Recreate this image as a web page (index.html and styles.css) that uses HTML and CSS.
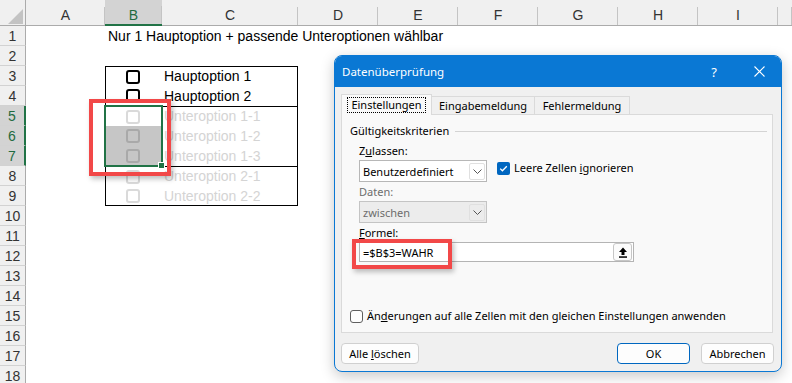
FILE: index.html
```html
<!DOCTYPE html>
<html lang="de">
<head>
    <meta charset="UTF-8">
    <meta name="viewport" content="width=device-width, initial-scale=1.0">
    <title>Datenüberprüfung - Hauptoption / Unteroptionen</title>
    <link rel="stylesheet" href="styles.css">
</head>
<body>
<div class="page">
    <div class="sheet">
        <div class="colhead">
            <div class="corner">
                <svg width="15" height="15" viewBox="0 0 15 15"><polygon points="15,0 15,15 0,15" fill="#c3c3c3"/></svg>
            </div>
            <div class="ch">A</div>
            <div class="ch sel">B</div>
            <div class="ch">C</div>
            <div class="ch">D</div>
            <div class="ch">E</div>
            <div class="ch">F</div>
            <div class="ch">G</div>
            <div class="ch">H</div>
            <div class="ch">I</div>
            <div class="ch last"></div>
        </div>

        <div class="rows">
            <div class="rh">1</div><div class="cell"></div><div class="cell note">Nur 1 Hauptoption + passende Unteroptionen wählbar</div><div class="cell"></div><div class="cell"></div>
            <div class="rh">2</div><div class="cell"></div><div class="cell"></div><div class="cell"></div><div class="cell"></div>

            <div class="rh">3</div><div class="cell"></div>
            <div class="cell tb top"><span class="cb"></span></div><div class="cell tc top">Hauptoption 1</div><div class="cell"></div>
            <div class="rh">4</div><div class="cell"></div>
            <div class="cell tb"><span class="cb"></span></div><div class="cell tc">Hauptoption 2</div><div class="cell"></div>

            <div class="rh sel">5</div><div class="cell"></div>
            <div class="cell tb top"><span class="cb sub"></span></div><div class="cell tc top sub">Unteroption 1-1</div><div class="cell"></div>
            <div class="rh sel">6</div><div class="cell"></div>
            <div class="cell tb shade"><span class="cb sub"></span></div><div class="cell tc sub">Unteroption 1-2</div><div class="cell"></div>
            <div class="rh sel">7</div><div class="cell"></div>
            <div class="cell tb shade"><span class="cb sub"></span></div><div class="cell tc sub">Unteroption 1-3</div><div class="cell"></div>

            <div class="rh">8</div><div class="cell"></div>
            <div class="cell tb top"><span class="cb sub"></span></div><div class="cell tc top sub">Unteroption 2-1</div><div class="cell"></div>
            <div class="rh">9</div><div class="cell"></div>
            <div class="cell tb bot"><span class="cb sub"></span></div><div class="cell tc bot sub">Unteroption 2-2</div><div class="cell"></div>

            <div class="rh">10</div><div class="cell"></div><div class="cell"></div><div class="cell"></div><div class="cell"></div>
            <div class="rh">11</div><div class="cell"></div><div class="cell"></div><div class="cell"></div><div class="cell"></div>
            <div class="rh">12</div><div class="cell"></div><div class="cell"></div><div class="cell"></div><div class="cell"></div>
            <div class="rh">13</div><div class="cell"></div><div class="cell"></div><div class="cell"></div><div class="cell"></div>
            <div class="rh">14</div><div class="cell"></div><div class="cell"></div><div class="cell"></div><div class="cell"></div>
            <div class="rh">15</div><div class="cell"></div><div class="cell"></div><div class="cell"></div><div class="cell"></div>
            <div class="rh">16</div><div class="cell"></div><div class="cell"></div><div class="cell"></div><div class="cell"></div>
            <div class="rh">17</div><div class="cell"></div><div class="cell"></div><div class="cell"></div><div class="cell"></div>
            <div class="rh">18</div><div class="cell"></div><div class="cell"></div><div class="cell"></div><div class="cell"></div>
        </div>

        <!-- Markierung B5:B7 -->
        <div class="selection"></div>
        <div class="handle"></div>
    </div>

    <div class="dialog">
        <div class="titlebar">
            <span class="dtitle">Datenüberprüfung</span>
            <span class="help">?</span>
            <span class="close">
                <svg width="11" height="11" viewBox="0 0 11 11"><path d="M0.5 0.5 L10.5 10.5 M10.5 0.5 L0.5 10.5" stroke="#fff" stroke-width="1.1"/></svg>
            </span>
        </div>
        <div class="dbody">
            <div class="tabs">
                <div class="tab active"><span class="focus">Einstellungen</span></div>
                <div class="tab w2">Eingabemeldung</div>
                <div class="tab w3">Fehlermeldung</div>
            </div>
            <div class="panel">
                <div class="group"><span>Gültigkeitskriterien</span><span class="rule"></span></div>
                <div class="fields">
                    <div class="lbl">Z<u>u</u>lassen:</div>
                    <div class="line">
                        <div class="select">
                            <span class="val">Benutzerdefiniert</span>
                            <span class="drop"><svg width="9" height="5" viewBox="0 0 9 5"><polyline points="0.5,0.5 4.5,4.5 8.5,0.5" fill="none" stroke="#555" stroke-width="1"/></svg></span>
                        </div>
                        <div class="check">
                            <span class="box on"><svg width="13" height="13" viewBox="0 0 13 13"><path d="M3.2 6.6 L5.4 8.8 L9.8 4.2" fill="none" stroke="#fff" stroke-width="1.3"/></svg></span>
                            <span>Leere Zellen <u>i</u>gnorieren</span>
                        </div>
                    </div>
                    <div class="lbl dim">Daten:</div>
                    <div class="select off">
                        <span class="val">zwischen</span>
                        <span class="drop"><svg width="9" height="5" viewBox="0 0 9 5"><polyline points="0.5,0.5 4.5,4.5 8.5,0.5" fill="none" stroke="#555" stroke-width="1"/></svg></span>
                    </div>
                    <div class="lbl"><u>F</u>ormel:</div>
                    <div class="formula">
                        <span class="val">=$B$3=WAHR</span>
                        <span class="pick"><svg width="10" height="11" viewBox="0 0 10 11"><path d="M5 0.5 L9 5 H6.5 V8 H3.5 V5 H1 Z" fill="#000"/><rect x="1" y="9.3" width="8" height="1.5" fill="#000"/></svg></span>
                    </div>
                </div>
                <div class="check apply">
                    <span class="box"></span>
                    <span>Än<u>d</u>erungen auf alle Zellen mit den gleichen Einstellungen anwenden</span>
                </div>
            </div>
            <div class="buttons">
                <button class="btn">Alle <u>l</u>öschen</button>
                <span class="spacer"></span>
                <button class="btn ok">OK</button>
                <button class="btn">Abbrechen</button>
            </div>
        </div>
    </div>

    <!-- rote Hervorhebungen -->
    <div class="mark mark-cells"></div>
    <div class="mark mark-formula"></div>
</div>
</body>
</html>
```

FILE: styles.css
```css
body {
    margin: 0;
    padding: 0;
    background-color: #fff;
    font-family: "Liberation Sans", Arial, sans-serif;
    color: #000;
}
.page {
    position: relative;
    width: 792px;
    height: 383px;
    overflow: hidden;
}

/* Tabelle */
.sheet {
    position: relative;
}
.colhead {
    display: grid;
    grid-template-columns: 26px 79px 57px 136px repeat(6, 80px) 1fr;
    height: 26px;
    box-sizing: border-box;
    background-color: #f0f0f0;
    border-bottom: 1px solid #ababab;
}
.corner {
    display: flex;
    justify-content: flex-end;
    align-items: flex-end;
    padding: 0 2px 1px 0;
    border-right: 1px solid #ababab;
}
.ch {
    padding-top: 7px;
    line-height: 16px;
    text-align: center;
    font-size: 14px;
    color: #333;
    background: linear-gradient(#c4c4c4, #c4c4c4) right bottom / 1px 18px no-repeat;
}
.ch.sel {
    background-color: #d3d3d3;
    color: #1f6b3f;
    border-bottom: 2px solid #217346;
    margin-bottom: -1px;
}
.rows {
    display: grid;
    grid-template-columns: 26px 79px 57px 136px 1fr;
    grid-auto-rows: 20px;
}
.rh {
    box-sizing: border-box;
    padding-top: 1px;
    background-color: #f0f0f0;
    border-right: 1px solid #ababab;
    border-bottom: 1px solid #d2d2d2;
    font-size: 14px;
    line-height: 19px;
    text-align: center;
    color: #333;
}
.rh.sel {
    background-color: #d3d3d3;
    color: #1f6b3f;
    border-right: 2px solid #217346;
}
.cell {
    box-sizing: border-box;
    font-size: 14px;
    line-height: 20px;
    white-space: nowrap;
}
.note {
    padding-left: 3px;
}
.tb {
    border-left: 1px solid #000;
    display: flex;
    align-items: center;
    justify-content: center;
}
.tc {
    border-right: 1px solid #000;
    padding-left: 2px;
}
.top {
    border-top: 1px solid #000;
    line-height: 19px;
}
.bot {
    border-bottom: 1px solid #000;
}
.tc.sub {
    color: #d4d4d4;
}
.shade {
    background-color: #c6c6c6;
}
.cb {
    width: 14px;
    height: 14px;
    box-sizing: border-box;
    border: 2px solid #000;
    border-radius: 3px;
    margin-left: -2px;
}
.cb.sub {
    border-color: #dadada;
}
.shade .cb.sub {
    border-color: #a9a9a9;
}
.selection {
    position: absolute;
    left: 104px;
    top: 105px;
    width: 59px;
    height: 62px;
    box-sizing: border-box;
    border: 2px solid #217346;
}
.handle {
    position: absolute;
    left: 158px;
    top: 162px;
    width: 7px;
    height: 7px;
    box-sizing: border-box;
    background-color: #217346;
    border: 1px solid #fff;
}

/* Dialog */
.dialog {
    position: absolute;
    left: 334px;
    top: 55px;
    width: 448px;
    height: 317px;
    box-sizing: border-box;
    border: 1px solid #0a78d4;
    border-radius: 8px;
    background-color: #f0f0f0;
    overflow: hidden;
    font-family: "Noto Sans", "Open Sans", sans-serif;
    font-size: 11px;
    color: #000;
    box-shadow: 0 4px 14px rgba(0, 0, 0, 0.22);
}
.titlebar {
    display: flex;
    align-items: center;
    height: 31px;
    padding-left: 7px;
    background-color: #0a78d4;
    color: #fff;
    font-size: 11.5px;
}
.dtitle {
    flex: 1;
}
.help {
    width: 46px;
    text-align: center;
    font-size: 13px;
}
.close {
    width: 44px;
    display: flex;
    justify-content: center;
}
.dbody {
    padding: 7px 8px 0 6px;
}
.tabs {
    display: flex;
    align-items: flex-end;
    height: 20px;
}
.tab {
    box-sizing: border-box;
    height: 18px;
    display: flex;
    align-items: center;
    justify-content: center;
    border: 1px solid #dadada;
    border-bottom: none;
    border-left: none;
    background-color: #f0f0f0;
}
.tab.active {
    width: 91px;
    height: 21px;
    margin-bottom: -1px;
    position: relative;
    border-left: 1px solid #dadada;
    background-color: #f9f9f9;
}
.tab.w2 {
    width: 103px;
}
.tab.w3 {
    width: 95px;
}
.focus {
    border: 1px dotted #000;
    padding: 0 3px;
    line-height: 14px;
}
.panel {
    height: 219px;
    box-sizing: border-box;
    display: flex;
    flex-direction: column;
    padding: 8px 5px 8px 8px;
    background-color: #f9f9f9;
    border: 1px solid #dadada;
}
.group {
    display: flex;
    align-items: center;
    line-height: 16px;
}
.rule {
    flex: 1;
    margin-left: 6px;
    border-top: 1px solid #d4d4d4;
}
.fields {
    padding-left: 9px;
}
.lbl {
    margin-top: 2px;
    line-height: 16px;
}
.fields .lbl:first-child {
    margin-top: 4px;
}
.lbl.dim {
    color: #6d6d6d;
}
.line {
    display: flex;
    align-items: flex-start;
    margin-top: 1px;
}
.select {
    width: 128px;
    height: 22px;
    box-sizing: border-box;
    display: flex;
    align-items: center;
    border: 1px solid #b7b7b7;
    background-color: #fff;
}
.select.off {
    margin-top: 1px;
    background-color: #ececec;
    color: #6d6d6d;
    border-color: #c4c4c4;
}
.val {
    flex: 1;
    padding-left: 3px;
}
.drop {
    width: 16px;
    height: 17px;
    box-sizing: border-box;
    margin-right: 1px;
    display: flex;
    align-items: center;
    justify-content: center;
    border: 1px solid #e0e0e0;
    border-radius: 2px;
}
.check {
    display: flex;
    align-items: center;
    gap: 4px;
    line-height: 16px;
    margin-left: 10px;
}
.box {
    width: 13px;
    height: 13px;
    box-sizing: border-box;
    border: 1px solid #5f5f5f;
    border-radius: 3px;
    background-color: #fdfdfd;
}
.box.on {
    border: none;
    border-radius: 2px;
    background-color: #0067c0;
}
.box svg {
    display: block;
}
.formula {
    width: 275px;
    height: 20px;
    box-sizing: border-box;
    margin-top: 1px;
    display: flex;
    align-items: center;
    border: 1px solid #b4b4b4;
    background-color: #fff;
}
.pick {
    width: 19px;
    height: 18px;
    box-sizing: border-box;
    margin-right: 1px;
    display: flex;
    align-items: center;
    justify-content: center;
    border: 1px solid #c6c6c6;
    border-radius: 3px;
    background-color: #fbfbfb;
}
.apply {
    margin-top: auto;
    margin-left: 0;
}
.buttons {
    display: flex;
    gap: 11px;
    margin-top: 10px;
    margin-right: -1px;
}
.spacer {
    flex: 1;
}
.btn {
    height: 21px;
    width: 73px;
    padding: 0;
    font-family: inherit;
    font-size: 11px;
    color: #000;
    background-color: #fdfdfd;
    border: 1px solid #d0d0d0;
    border-radius: 4px;
}
.btn:first-child {
    width: 78px;
}
.btn.ok {
    border-color: #0067c0;
}

/* rote Rahmen */
.mark {
    position: absolute;
    box-sizing: border-box;
    border: 4px solid #f24848;
    box-shadow: 2px 3px 5px rgba(0, 0, 0, 0.25);
}
.mark-cells {
    left: 89px;
    top: 99px;
    width: 82px;
    height: 77px;
}
.mark-formula {
    left: 352px;
    top: 239px;
    width: 100px;
    height: 30px;
}
```
